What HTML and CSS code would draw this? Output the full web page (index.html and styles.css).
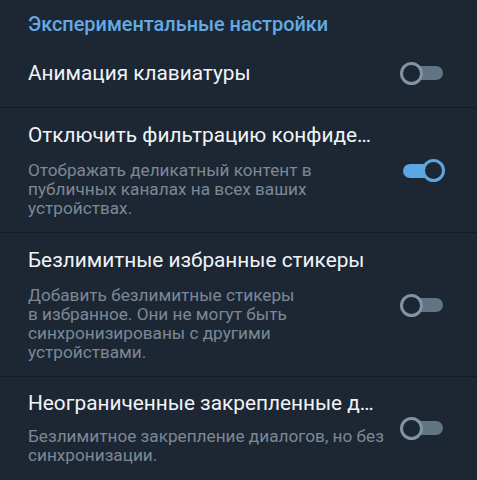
FILE: index.html
```html
<!DOCTYPE html>
<html lang="ru">
<head>
<meta charset="utf-8">
<link rel="stylesheet" href="styles.css">
</head>
<body>
<div class="screen">
  <div class="section-title">Экспериментальные настройки</div>

  <div class="row row-single">
    <div class="texts">
      <div class="title">Анимация клавиатуры</div>
    </div>
    <div class="switch off"><span class="track"></span><span class="knob"></span></div>
  </div>

  <div class="row">
    <div class="texts">
      <div class="title">Отключить фильтрацию конфиде…</div>
      <div class="sub">Отображать деликатный контент в<br>публичных каналах на всех ваших<br>устройствах.</div>
    </div>
    <div class="switch on"><span class="track"></span><span class="knob"></span></div>
  </div>

  <div class="row">
    <div class="texts">
      <div class="title">Безлимитные избранные стикеры</div>
      <div class="sub">Добавить безлимитные стикеры<br>в избранное. Они не могут быть<br>синхронизированы с другими<br>устройствами.</div>
    </div>
    <div class="switch off"><span class="track"></span><span class="knob"></span></div>
  </div>

  <div class="row last">
    <div class="texts">
      <div class="title">Неограниченные закрепленные д…</div>
      <div class="sub">Безлимитное закрепление диалогов, но без<br>синхронизации.</div>
    </div>
    <div class="switch off"><span class="track"></span><span class="knob"></span></div>
  </div>
</div>
</body>
</html>
```

FILE: styles.css
```css
html, body {
  margin: 0;
  padding: 0;
  background: #1d2733;
}
.screen {
  width: 477px;
  height: 480px;
  overflow: hidden;
  background: #1d2733;
  font-family: Roboto, "Noto Sans", "Liberation Sans", sans-serif;
}
.section-title {
  padding: 13px 0 0 28px;
  height: 35px;
  box-sizing: border-box;
  line-height: 24px;
  font-size: 19.9px;
  font-weight: 500;
  color: #64aae3;
  white-space: nowrap;
}
.row {
  display: flex;
  align-items: center;
  padding: 15px 32px 14px 28px;
  border-bottom: 1px solid #131b24;
}
.row-single {
  padding-top: 26px;
  padding-bottom: 22px;
}
.row.last {
  border-bottom: none;
  padding-top: 14px;
}
.texts {
  flex: 1;
  min-width: 0;
}
.title {
  font-size: 20.8px;
  line-height: 24px;
  color: #f1f4f7;
  white-space: nowrap;
}
.sub {
  margin-top: 14px;
  font-size: 17.2px;
  line-height: 19px;
  color: #7c8896;
  white-space: nowrap;
}
.row.last .sub {
  margin-top: 12px;
}
.switch {
  position: relative;
  flex: none;
  width: 45px;
  height: 24px;
  margin-left: 8px;
}
.switch .track {
  position: absolute;
  left: 3px;
  right: 2px;
  top: 5px;
  height: 14px;
  border-radius: 7px;
}
.switch .knob {
  position: absolute;
  top: 0.5px;
  width: 23px;
  height: 23px;
  box-sizing: border-box;
  border-radius: 50%;
  border: 3px solid;
  background: #1d2733;
}
.switch.off .track { background: #617484; }
.switch.off .knob { left: 0; border-color: #8194a6; }
.switch.on .track { background: #5ea6e2; }
.switch.on .knob { right: 0; border-color: #5ea6e2; }
```
